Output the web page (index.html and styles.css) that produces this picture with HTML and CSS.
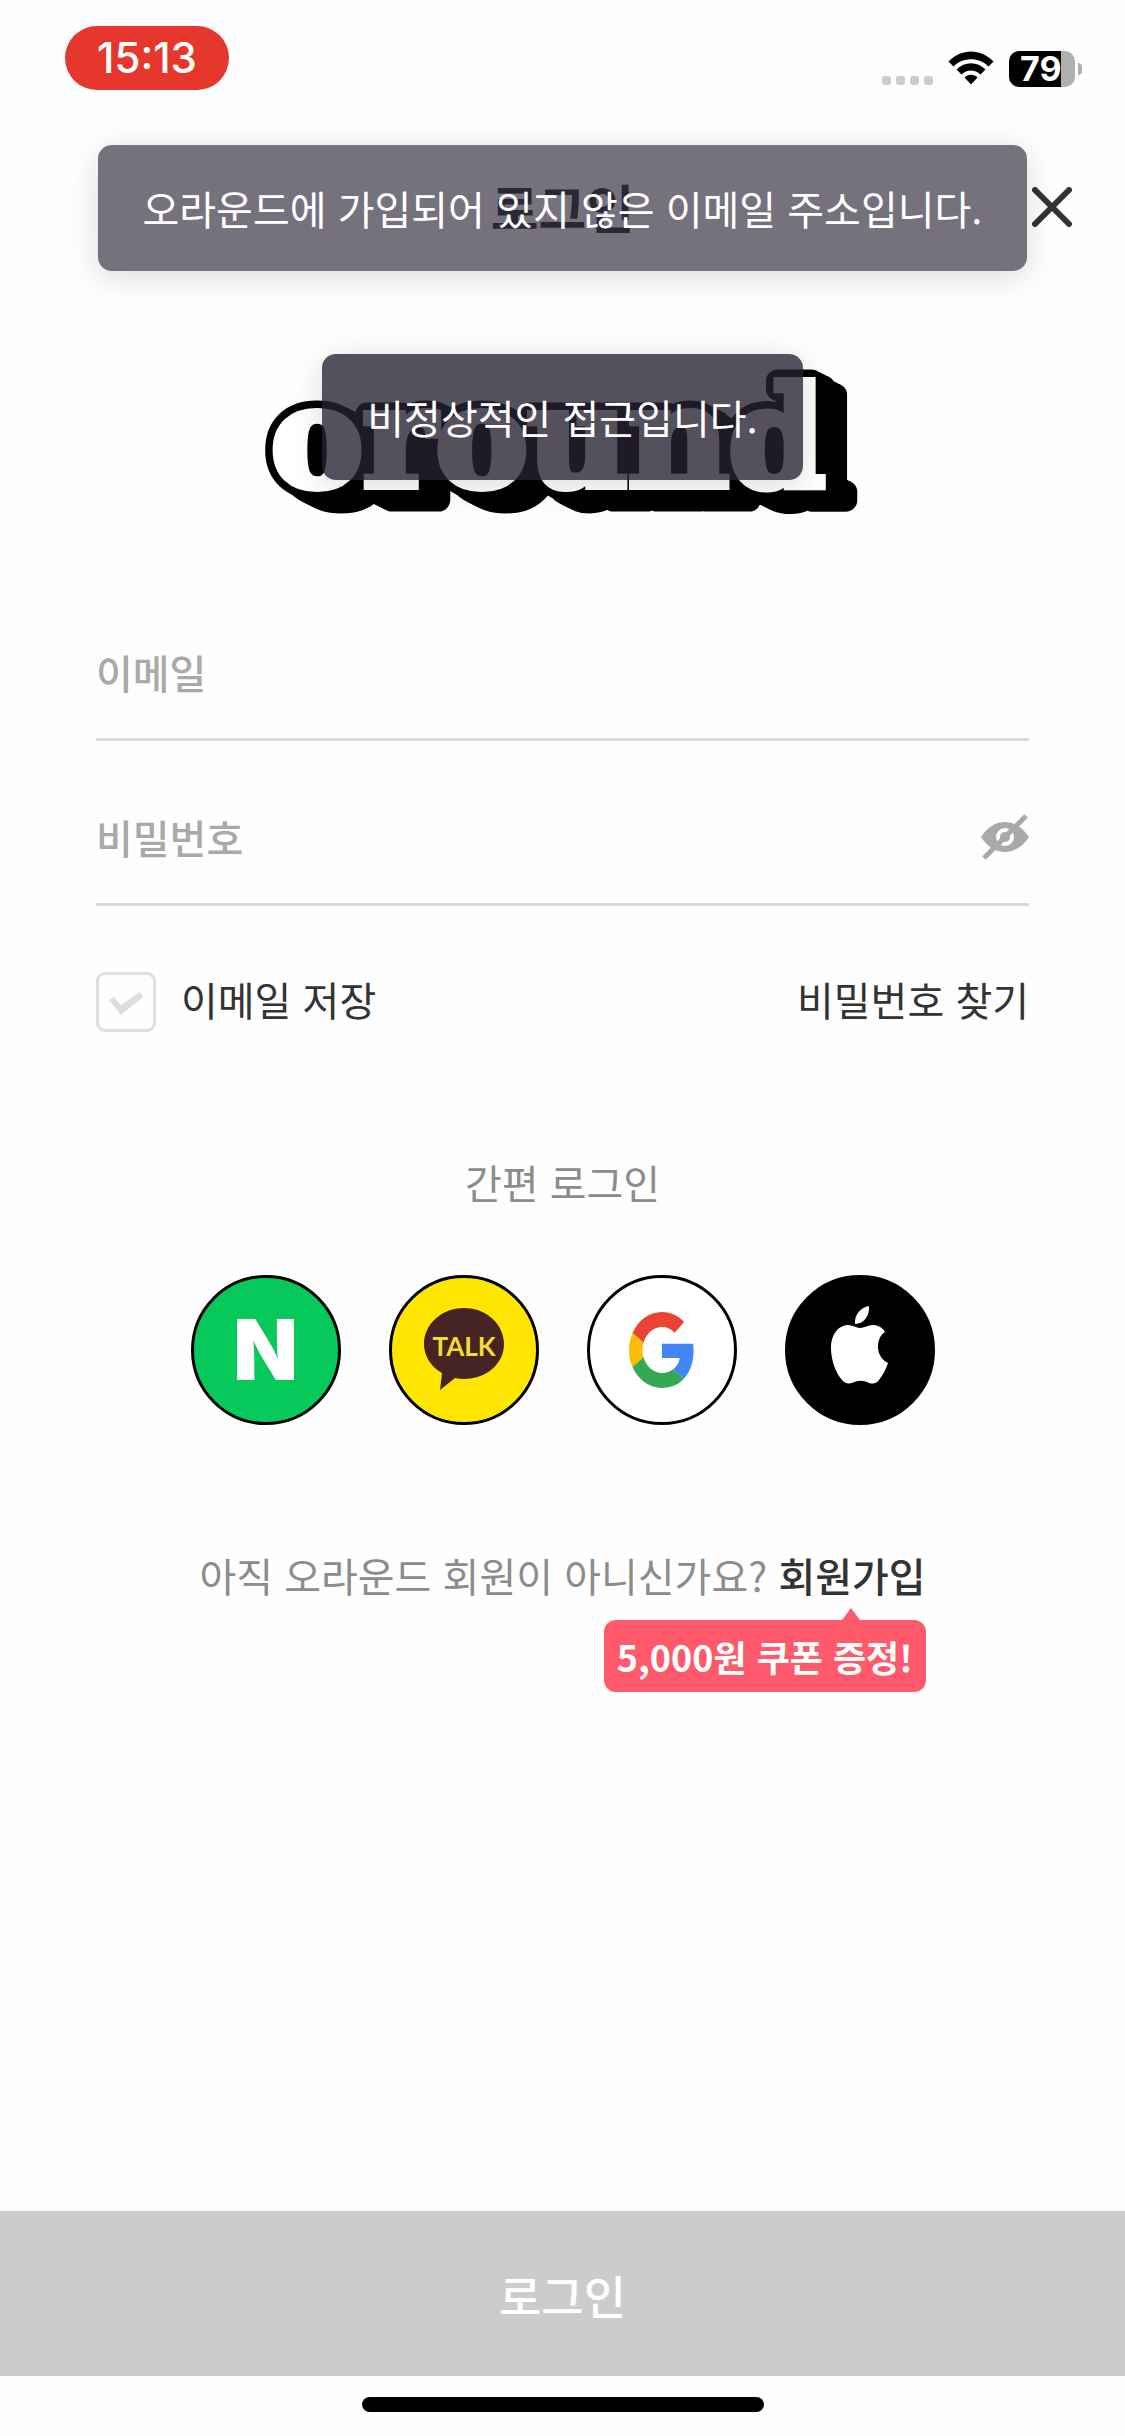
FILE: index.html
```html
<!DOCTYPE html>
<html lang="ko">
<head>
<meta charset="utf-8">
<meta name="viewport" content="width=device-width, initial-scale=1">
<title>로그인</title>
<link rel="stylesheet" href="styles.css">
</head>
<body>
<div class="page">
  <div class="status-bar">
    <span class="clock">15:13</span>
    <div class="indicators">
      <div class="signal"><i class="dot"></i><i class="dot"></i><i class="dot"></i><i class="dot"></i></div>
      <svg class="wifi" viewBox="0 0 46 34" aria-hidden="true">
        <path d="M0.500 10.500C13-3 33-3 45.500 10.500L40.500 15.500C31 5.800 15 5.800 5.500 15.500Z"/>
        <path d="M8.500 18.500C17 10 29 10 37.500 18.500L32.500 23.500C27 18 19 18 13.500 23.500Z"/>
        <path d="M16.500 26.500C20 22.800 26 22.800 29.500 26.500L23 33.500Z"/>
      </svg>
      <div class="battery"><span class="battery-body">79</span><i class="battery-tip"></i></div>
    </div>
  </div>

  <header class="header">
    <h1 class="title">로그인</h1>
    <button class="close" type="button" aria-label="닫기">
      <svg viewBox="0 0 40 40" aria-hidden="true"><path d="M3 3L37 37M37 3L3 37"/></svg>
    </button>
  </header>

  <div class="toasts" role="status">
    <p class="toast toast-fading">오라운드에 가입되어 있지 않은 이메일 주소입니다.</p>
    <p class="toast">비정상적인 접근입니다.</p>
  </div>

  <form class="form" id="login">
    <svg class="logo" viewBox="0 0 600 150" role="img" aria-label="oround">
      <g class="logo-shade"><text id="wordmark" x="8" y="116">oround</text></g>
      <use class="logo-face" href="#wordmark"/>
    </svg>

    <div class="field">
      <input class="input" type="email" placeholder="이메일" aria-label="이메일">
    </div>
    <div class="field">
      <input class="input" type="password" placeholder="비밀번호" aria-label="비밀번호">
      <button class="reveal" type="button" aria-label="비밀번호 보기">
        <svg viewBox="0 0 48 48" aria-hidden="true">
          <path class="eye" d="M0 24C6 15 14 9 24 9S42 15 48 24C42 33 34 39 24 39S6 33 0 24Z"/>
          <circle class="iris" cx="24" cy="24" r="9"/>
          <circle class="eye" cx="24" cy="24" r="5"/>
          <path class="slash" d="M3 45L45 3"/>
        </svg>
      </button>
    </div>

    <div class="options">
      <label class="save"><input class="check" type="checkbox">이메일 저장</label>
      <a class="find" href="#find">비밀번호 찾기</a>
    </div>

    <h2 class="social-title">간편 로그인</h2>
    <div class="social">
      <button class="sns naver" type="button" aria-label="네이버">N</button>
      <button class="sns kakao" type="button" aria-label="카카오톡">
        <svg viewBox="0 0 80 84" aria-hidden="true">
          <path class="bubble" d="M40 0C62 0 80 16 80 36S62 71 40 71Q35 71 31 70L16 82L18 65C7 59 0 48 0 36C0 16 18 0 40 0Z"/>
          <text class="talk" x="40" y="48">TALK</text>
        </svg>
      </button>
      <button class="sns google" type="button" aria-label="Google">
        <svg viewBox="0 0 48 48" preserveAspectRatio="none" aria-hidden="true">
          <path fill="#ea4335" d="M24 9.500c3.540 0 6.710 1.220 9.210 3.600l6.850-6.850C35.900 2.380 30.470 0 24 0 14.620 0 6.510 5.380 2.560 13.220l7.980 6.190C12.430 13.720 17.740 9.500 24 9.500z"/>
          <path fill="#4285f4" d="M46.980 24.550c0-1.570-.15-3.090-.38-4.550H24v9.020h12.940c-.58 2.960-2.260 5.480-4.780 7.180l7.730 6c4.510-4.180 7.090-10.360 7.090-17.650z"/>
          <path fill="#fbbc05" d="M10.530 28.590c-.48-1.450-.76-2.990-.76-4.590s.27-3.140.76-4.590l-7.980-6.190C.92 16.460 0 20.120 0 24c0 3.880.92 7.540 2.560 10.780l7.970-6.190z"/>
          <path fill="#34a853" d="M24 48c6.480 0 11.930-2.130 15.890-5.810l-7.730-6c-2.150 1.450-4.920 2.300-8.160 2.300-6.260 0-11.570-4.220-13.470-9.910l-7.980 6.190C6.510 42.620 14.620 48 24 48z"/>
        </svg>
      </button>
      <button class="sns apple" type="button" aria-label="Apple">
        <svg viewBox="0 0 57 78" aria-hidden="true">
          <path d="M38 0C39 9 33 18 24 18C23 9 30 1 38 0Z"/>
          <path d="M29 22C33 22 37 19 42 19C47 19 52 22 54 26C49 29 47 35 47 41C47 48 51 54 57 57C55 63 52 69 48 74C45 78 42 78 38 77C32 74 27 74 21 77C16 78 14 77 11 74C4 66 0 53 0 42C0 28 8 19 17 19C22 19 25 22 29 22Z"/>
        </svg>
      </button>
    </div>

    <p class="join">아직 오라운드 회원이 아니신가요?
      <a class="join-link" href="#join">회원가입<span class="coupon">5,000원 쿠폰 증정!</span></a>
    </p>
  </form>

  <footer class="footer">
    <button class="submit" type="submit" form="login">로그인</button>
    <div class="home-area"><div class="home-bar"></div></div>
  </footer>
</div>
</body>
</html>
```
FILE: styles.css
```css
* {
  box-sizing: border-box;
}

body {
  margin: 0;
  background: #fefefe;
  color: #333;
  font-family: "Noto Sans CJK KR", sans-serif;
  font-size: 40px;
  line-height: 60px;
}

button,
input {
  padding: 0;
  border: 0;
  background: none;
  font: inherit;
  color: inherit;
}

a {
  color: inherit;
  text-decoration: none;
}

svg {
  display: block;
}

.page {
  position: relative;
  display: flex;
  flex-direction: column;
  min-height: 100vh;
}

/* Status bar */
.status-bar {
  display: flex;
  justify-content: space-between;
  align-items: flex-start;
  height: 132px;
  padding: 26px 43px 0 65px;
  font-family: Inter, sans-serif;
}

.clock {
  width: 164px;
  border-radius: 32px;
  background: #e6372e;
  color: #fff;
  font-size: 42px;
  font-weight: 500;
  line-height: 64px;
  text-align: center;
}

.indicators {
  display: flex;
  align-items: flex-end;
  gap: 15px;
  padding-top: 25px;
}

.signal {
  display: flex;
  gap: 5px;
  padding-bottom: 2px;
}

.dot {
  width: 9px;
  height: 9px;
  border-radius: 3px;
  background: #ccc;
}

.wifi {
  width: 46px;
  height: 34px;
  margin-bottom: 2px;
}

.battery {
  display: flex;
  align-items: center;
  gap: 3px;
}

.battery-body {
  width: 66px;
  height: 36px;
  padding-left: 11px;
  border-radius: 10px;
  background: linear-gradient(to right, #000 52px, #b0b0b0 52px);
  color: #fff;
  font-size: 34px;
  font-weight: 700;
  line-height: 36px;
}

.battery-tip {
  width: 4px;
  height: 12px;
  border-radius: 0 4px 4px 0;
  background: #b0b0b0;
}

/* Header */
.header {
  display: grid;
  grid-template-columns: 1fr auto 1fr;
  align-items: center;
  height: 150px;
  padding: 0 53px;
}

.title {
  grid-column: 2;
  margin: 0;
  font-size: 52px;
  font-weight: 700;
  line-height: 72px;
}

.close {
  justify-self: end;
  width: 40px;
  height: 40px;
}

.close path {
  fill: none;
  stroke: #333;
  stroke-width: 6;
  stroke-linecap: round;
}

/* Toasts float over the header and the logo */
.toasts {
  position: absolute;
  top: 145px;
  left: 0;
  right: 0;
  z-index: 1;
  display: flex;
  flex-direction: column;
  align-items: center;
  gap: 83px;
  pointer-events: none;
}

.toast {
  margin: 0;
  padding: 33px 45px;
  border-radius: 14px;
  background: rgba(39, 33, 51, 0.79);
  box-shadow: 0 6px 32px rgba(0, 0, 0, 0.14);
  color: #fff;
}

.toast-fading {
  background: rgba(39, 33, 51, 0.64);
}

/* Form */
.form {
  display: flex;
  flex-direction: column;
  flex: 1;
  padding: 88px 96px 0;
}

.logo {
  align-self: center;
  width: 600px;
  height: 150px;
  margin-bottom: 56px;
  overflow: visible;
  font-family: "DejaVu Serif", serif;
  font-size: 138px;
  font-weight: 700;
}

.logo-shade {
  fill: #000;
  stroke: #000;
  stroke-width: 23px;
  stroke-linejoin: round;
  filter: drop-shadow(4px 2px 0 #000) drop-shadow(8px 4px 0 #000) drop-shadow(12px 8px 0 #000);
}

.logo-face {
  fill: #fff;
  stroke: #fff;
  stroke-width: 8px;
}

.field {
  display: flex;
  align-items: center;
  height: 165px;
  padding-top: 29px;
  border-bottom: 3px solid #dadada;
}

.input {
  flex: 1;
  min-width: 0;
  height: 90px;
  outline: 0;
}

.input::placeholder {
  color: #a9a9a9;
  font-weight: 500;
  opacity: 1;
}

.reveal {
  width: 48px;
  height: 48px;
}

.eye {
  fill: #a9a9a9;
}

.iris {
  fill: #fefefe;
}

.slash {
  stroke: #a9a9a9;
  stroke-width: 5;
}

.options {
  display: flex;
  justify-content: space-between;
  align-items: flex-start;
  padding-top: 66px;
  line-height: 54px;
}

.save {
  display: flex;
  align-items: flex-start;
  gap: 25px;
}

.check {
  appearance: none;
  width: 60px;
  height: 60px;
  margin: 0;
  border: 3px solid #dedede;
  border-radius: 9px;
}

.check::before {
  content: "";
  display: block;
  height: 54px;
  background: #dedede;
  clip-path: polygon(10px 25px, 15px 22px, 22px 30px, 41px 17px, 44px 22px, 22px 40px);
}

.check:checked::before {
  background: #333;
}

.social-title {
  margin: 120px 0 0;
  color: #8c8c8c;
  font-size: 40px;
  font-weight: 400;
  text-align: center;
}

.social {
  display: flex;
  justify-content: center;
  gap: 48px;
  padding-top: 63px;
}

.sns {
  display: flex;
  justify-content: center;
  align-items: center;
  width: 150px;
  height: 150px;
  border: 3px solid #000;
  border-radius: 50%;
}

.naver {
  background: #06c85b;
  color: #fff;
  font-family: Inter, sans-serif;
  font-size: 84px;
  font-weight: 900;
}

.kakao {
  background: #ffe600;
}

.kakao svg {
  width: 80px;
  height: 84px;
}

.bubble {
  fill: #472424;
}

.talk {
  fill: #f3dc38;
  font-family: Lato, sans-serif;
  font-size: 26px;
  font-weight: 700;
  text-anchor: middle;
}

.google {
  background: #fff;
}

.google svg {
  width: 66px;
  height: 76px;
}

.apple {
  background: #000;
}

.apple svg {
  width: 57px;
  height: 78px;
  margin-bottom: 10px;
  fill: #fff;
}

.join {
  margin: 120px 0 0;
  color: #8c8c8c;
  text-align: center;
}

.join-link {
  position: relative;
  color: #333;
  font-weight: 500;
}

/* Coupon bubble hanging under the sign-up link */
.coupon {
  position: absolute;
  top: 74px;
  right: 0;
  padding: 6px 13px;
  border-radius: 12px;
  background: #ff5a6b;
  color: #fff;
  font-size: 36px;
  font-weight: 700;
  white-space: nowrap;
}

.coupon::before {
  content: "";
  position: absolute;
  right: 66px;
  bottom: 100%;
  border: 9px solid transparent;
  border-top: 0;
  border-bottom: 12px solid #ff5a6b;
}

/* Footer */
.submit {
  width: 100%;
  height: 165px;
  background: #ccc;
  color: #fff;
  font-size: 46px;
  font-weight: 500;
}

.home-area {
  display: flex;
  justify-content: center;
  height: 60px;
  padding-top: 21px;
}

.home-bar {
  width: 402px;
  height: 15px;
  border-radius: 8px;
  background: #000;
}
```
